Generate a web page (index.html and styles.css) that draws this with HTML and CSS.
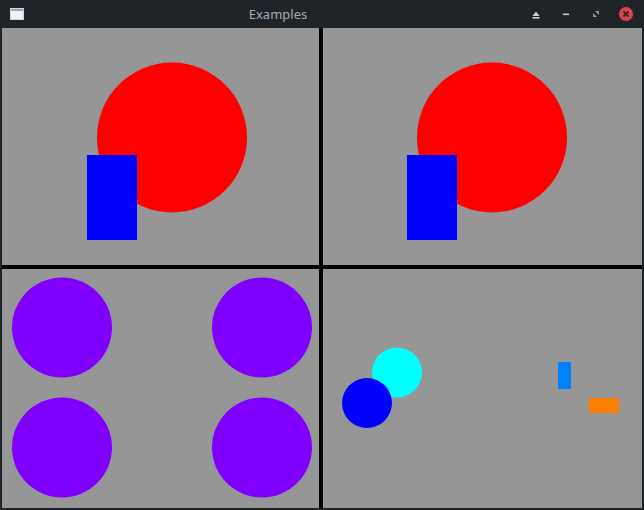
FILE: index.html
```html
<!DOCTYPE html>
<html>
<head>
<meta charset="utf-8">
<link rel="stylesheet" href="styles.css">
</head>
<body>
<div class="window">
  <div class="titlebar">
    <div class="app-icon"><svg width="14" height="12" viewBox="0 0 14 12"><rect x="0.5" y="0.5" width="13" height="11" fill="#f2f2f2" stroke="#cfd4d6"/><rect x="1" y="1" width="12" height="2" fill="#8ea6c8"/></svg></div>
    <div class="title">Examples</div>
    <div class="buttons">
      <svg class="btn" width="16" height="16" viewBox="0 0 16 16"><path d="M4.5 10 L8 5.5 L11.5 10 Z" fill="#c8d0d2"/><rect x="4.5" y="11" width="7" height="1.6" fill="#c8d0d2"/></svg>
      <svg class="btn" width="16" height="16" viewBox="0 0 16 16"><rect x="5" y="7.5" width="6" height="1.6" fill="#c8d0d2"/></svg>
      <svg class="btn" width="16" height="16" viewBox="0 0 16 16"><path d="M7 5 L11 5 L11 9 Z M5 7 L5 11 L9 11 Z" fill="#8f9799"/></svg>
      <svg class="btn close" width="16" height="16" viewBox="0 0 16 16"><circle cx="8" cy="8" r="7" fill="#da4453"/><path d="M5.5 5.5 L10.5 10.5 M10.5 5.5 L5.5 10.5" stroke="#3a1f22" stroke-width="1.8"/></svg>
    </div>
  </div>
  <div class="grid">
    <div class="panel p-left">
      <svg width="317" height="237"><circle cx="170" cy="109.5" r="75" fill="#ff0000"/><rect x="85" y="127" width="50" height="85" fill="#0000ff"/></svg>
    </div>
    <div class="panel p-right">
      <svg width="319" height="237"><circle cx="169" cy="109.5" r="75" fill="#ff0000"/><rect x="84" y="127" width="50" height="85" fill="#0000ff"/></svg>
    </div>
    <div class="panel p-left">
      <svg width="317" height="239"><circle cx="60" cy="58.5" r="50" fill="#8000ff"/><circle cx="260" cy="58.5" r="50" fill="#8000ff"/><circle cx="60" cy="178.5" r="50" fill="#8000ff"/><circle cx="260" cy="178.5" r="50" fill="#8000ff"/></svg>
    </div>
    <div class="panel p-right">
      <svg width="319" height="239"><circle cx="74" cy="103.5" r="25" fill="#00ffff"/><circle cx="44" cy="134" r="25" fill="#0000ff"/><rect x="235" y="93" width="13" height="27" fill="#0080ff"/><rect x="266" y="129" width="30" height="15" fill="#ff8000"/></svg>
    </div>
  </div>
</div>
</body>
</html>
```

FILE: styles.css
```css
html, body {
  margin: 0;
  padding: 0;
  background: #1e2427;
}
.window {
  width: 644px;
  height: 510px;
  background: #1e2427;
  display: flex;
  flex-direction: column;
}
.titlebar {
  height: 28px;
  display: flex;
  align-items: center;
  position: relative;
}
.app-icon {
  width: 14px;
  height: 12px;
  margin-left: 10px;
  display: flex;
}
.title {
  flex: 1;
  text-align: center;
  color: #a4adb0;
  font-family: "Noto Sans", sans-serif;
  font-size: 13px;
  padding-right: 112px;
  margin-top: -1px;
}
.buttons {
  position: absolute;
  right: 10px;
  top: 6px;
  display: flex;
  gap: 14px;
}
.btn {
  display: block;
}
.grid {
  margin-left: 2px;
  width: 640px;
  height: 480px;
  background: #000;
  display: grid;
  grid-template-columns: 317px 319px;
  grid-template-rows: 237px 239px;
  column-gap: 4px;
  row-gap: 4px;
}
.panel {
  background: #969696;
  overflow: hidden;
}
.panel svg {
  display: block;
}
```
